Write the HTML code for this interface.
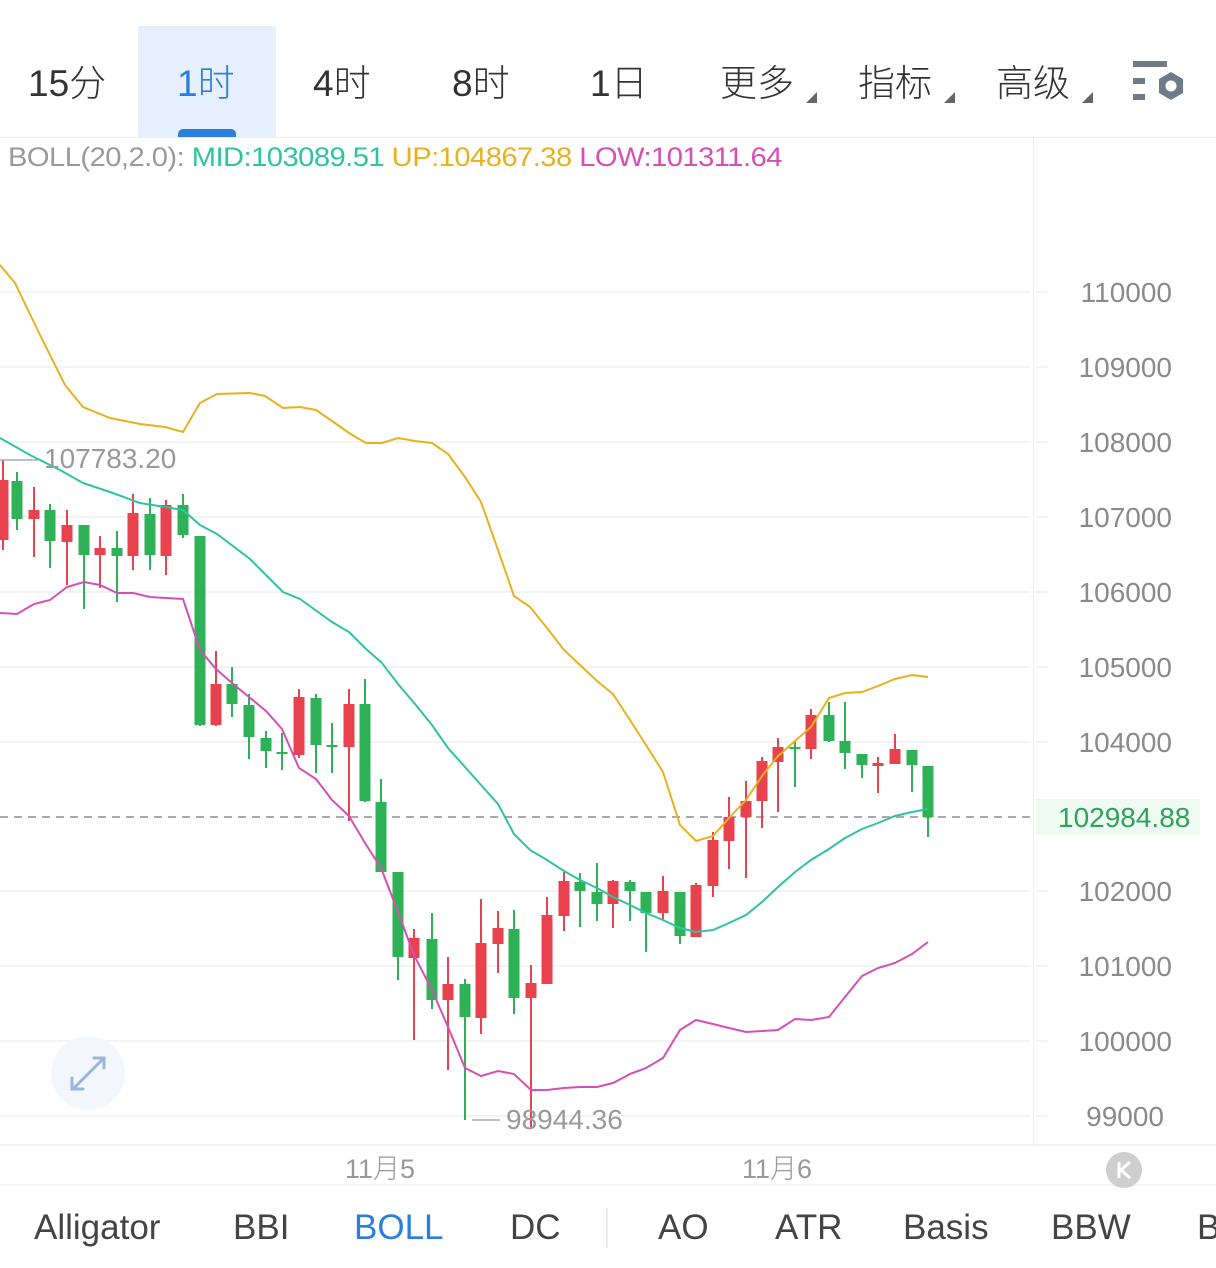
<!DOCTYPE html>
<html><head><meta charset="utf-8"><style>
html,body{margin:0;padding:0;background:#fff;width:1216px;height:1268px;overflow:hidden;font-family:"Liberation Sans","Noto Sans CJK SC",sans-serif}
.tab{position:absolute;top:53px;font-size:37px;color:#333;font-weight:300}
.tri{position:absolute;width:0;height:0;border-left:11px solid transparent;border-bottom:11px solid #666}
.ax{position:absolute;right:44px;font-size:28px;color:#8a8a8a;font-weight:300}
.bt{position:absolute;top:1208px;font-size:35px;color:#444;font-weight:300}
</style></head><body>
<div style="position:absolute;left:138px;top:26px;width:138px;height:111px;background:#e6f0fd"></div>
<div style="position:absolute;left:178px;top:129px;width:58px;height:8px;background:#2b7de0;border-radius:5px 5px 0 0"></div>
<div class="tab" style="left:28px">15分</div>
<div class="tab" style="left:177px;color:#2b7de0">1时</div>
<div class="tab" style="left:313px">4时</div>
<div class="tab" style="left:452px">8时</div>
<div class="tab" style="left:590px">1日</div>
<div class="tab" style="left:720px">更多</div><div class="tri" style="left:806px;top:92px"></div>
<div class="tab" style="left:858px">指标</div><div class="tri" style="left:944px;top:92px"></div>
<div class="tab" style="left:996px">高级</div><div class="tri" style="left:1082px;top:92px"></div>
<svg style="position:absolute;left:1130px;top:58px" width="60" height="50" viewBox="0 0 60 50">
<rect x="3" y="3" width="34" height="6" fill="#6f7b88"/><rect x="3" y="20" width="12" height="6" fill="#6f7b88"/><rect x="3" y="36" width="12" height="6" fill="#6f7b88"/>
<polygon points="41,14 53,21 53,35 41,42 29,35 29,21" fill="#6f7b88"/><circle cx="41" cy="28" r="5.5" fill="#fff"/></svg>
<div style="position:absolute;left:0;top:137px;width:1216px;height:1px;background:#eee"></div>
<div style="position:absolute;left:8px;top:142px;font-size:27px;font-weight:300;white-space:nowrap;letter-spacing:-0.5px;transform:scaleX(1.08);transform-origin:0 0"><span style="color:#9a9a9a">BOLL(20,2.0):</span> <span style="color:#2ec4a0">MID:103089.51</span> <span style="color:#e8b21e">UP:104867.38</span> <span style="color:#d64fb5">LOW:101311.64</span></div>
<div style="position:absolute;left:1033px;top:138px;width:1px;height:1007px;background:#eee"></div>
<svg style="position:absolute;left:0;top:0" width="1216" height="1268">
<g stroke="#f0f0f0" stroke-width="1.5">
<line x1="0" y1="292" x2="1030" y2="292"/><line x1="0" y1="367" x2="1030" y2="367"/><line x1="0" y1="442" x2="1030" y2="442"/><line x1="0" y1="517" x2="1030" y2="517"/><line x1="0" y1="592" x2="1030" y2="592"/><line x1="0" y1="667" x2="1030" y2="667"/><line x1="0" y1="742" x2="1030" y2="742"/><line x1="0" y1="891" x2="1030" y2="891"/><line x1="0" y1="966" x2="1030" y2="966"/><line x1="0" y1="1041" x2="1030" y2="1041"/><line x1="0" y1="1116" x2="1030" y2="1116"/>
<line x1="1036" y1="292" x2="1048" y2="292"/><line x1="1036" y1="367" x2="1048" y2="367"/><line x1="1036" y1="442" x2="1048" y2="442"/><line x1="1036" y1="517" x2="1048" y2="517"/><line x1="1036" y1="592" x2="1048" y2="592"/><line x1="1036" y1="667" x2="1048" y2="667"/><line x1="1036" y1="742" x2="1048" y2="742"/><line x1="1036" y1="891" x2="1048" y2="891"/><line x1="1036" y1="966" x2="1048" y2="966"/><line x1="1036" y1="1041" x2="1048" y2="1041"/><line x1="1036" y1="1116" x2="1048" y2="1116"/>
</g>
<line x1="0" y1="817" x2="1030" y2="817" stroke="#aaa" stroke-width="2" stroke-dasharray="8,6"/>
<g id="c"></g>
<polyline fill="none" stroke="#e8b21e" stroke-width="2" points="0,265 15,283 40,335 65,385 83,407 110,418 140,424 165,427 183,432 200,403 217,394 250,393 265,396 283,408 300,407 316,410 332,421 349,433 366,443 382,443 398,438 415,441 432,443 448,454 465,477 481,502 498,550 514,596 530,607 547,628 564,650 580,665 597,681 613,694 630,720 646,745 663,772 680,825 696,841 713,836 729,818 746,800 762,776 778,756 795,741 811,727 829,698 845,693 862,692 878,686 895,679 912,675 928,677"/>
<polyline fill="none" stroke="#2ec4a0" stroke-width="2" points="0,438 30,455 60,470 83,483 110,492 140,503 165,507 183,510 200,525 217,534 250,559 283,592 300,599 332,622 349,632 365,648 382,663 398,684 415,704 432,725 448,748 465,767 481,785 498,804 514,834 530,850 547,860 564,871 580,880 597,888 613,897 630,905 646,913 663,920 680,928 696,932 713,930 729,923 746,915 762,902 778,887 795,872 811,860 829,849 845,838 862,829 878,823 895,816 912,812 928,809"/>
<polyline fill="none" stroke="#d64fb5" stroke-width="2" points="0,613 17,614 34,604 50,600 67,587 84,582 100,585 117,593 133,593 150,597 166,598 183,599 200,650 216,669 232,683 249,697 266,711 282,729 299,768 316,779 332,800 349,816 365,843 381,868 398,912 414,955 432,990 448,1027 465,1068 481,1076 498,1071 514,1074 531,1090 547,1090 564,1088 580,1087 597,1087 613,1083 630,1074 646,1068 663,1058 680,1030 696,1020 713,1024 729,1028 746,1032 762,1031 778,1030 795,1019 811,1020 829,1017 845,997 862,976 878,968 895,963 912,954 928,942"/>
<line x1="0" y1="460" x2="38" y2="460" stroke="#aaa" stroke-width="1.5"/>
<line x1="472" y1="1120" x2="500" y2="1120" stroke="#aaa" stroke-width="1.5"/>
<line x1="0" y1="1145" x2="1216" y2="1145" stroke="#eee" stroke-width="1.5"/>
<line x1="0" y1="1185" x2="1216" y2="1185" stroke="#f2f2f2" stroke-width="1.5"/>
<line x1="607" y1="1208" x2="607" y2="1248" stroke="#e4e4e4" stroke-width="1.5"/>
<circle cx="88" cy="1073" r="37" fill="#f3f7fd"/>
<g stroke="#9ab6dc" stroke-width="3" fill="none" stroke-linecap="round"><path d="M74 1088 L104 1058 M94 1058 L104 1058 L104 1068 M72 1078 L72 1089 L83 1089"/></g>
<circle cx="1124" cy="1170" r="18" fill="#cfcfcf"/>
<path d="M1119 1162 V1178 M1130 1162 L1121 1170 L1130 1178" stroke="#fff" stroke-width="3" fill="none"/>
</svg>
<div style="position:absolute;left:44px;top:443px;font-size:28px;color:#999;font-weight:300">107783.20</div>
<div style="position:absolute;left:506px;top:1104px;font-size:28px;color:#999;font-weight:300">98944.36</div>
<div class="ax" style="top:277px">110000</div><div class="ax" style="top:352px">109000</div><div class="ax" style="top:427px">108000</div><div class="ax" style="top:502px">107000</div><div class="ax" style="top:577px">106000</div><div class="ax" style="top:652px">105000</div><div class="ax" style="top:727px">104000</div><div class="ax" style="top:876px">102000</div><div class="ax" style="top:951px">101000</div><div class="ax" style="top:1026px">100000</div><div class="ax" style="top:1101px;right:52px">99000</div>
<div style="position:absolute;left:1036px;top:799px;width:164px;height:36px;background:#effaf2"></div>
<div style="position:absolute;left:1058px;top:802px;font-size:28px;color:#2fa35a;font-weight:300">102984.88</div>
<div style="position:absolute;left:345px;top:1147px;font-size:27px;color:#999;font-weight:300">11月5</div>
<div style="position:absolute;left:742px;top:1147px;font-size:27px;color:#999;font-weight:300">11月6</div>
<div class="bt" style="left:34px">Alligator</div><div class="bt" style="left:233px">BBI</div><div class="bt" style="left:354px;color:#2b7de0">BOLL</div><div class="bt" style="left:510px">DC</div><div class="bt" style="left:658px">AO</div><div class="bt" style="left:775px">ATR</div><div class="bt" style="left:903px">Basis</div><div class="bt" style="left:1051px">BBW</div><div class="bt" style="left:1197px">B</div>
<script>
var R="#e8424f",G="#2fb157";
var d=[[3,R,480,540,460,550],[17,G,481,519,472,530],[34,R,510,519,487,557],[50,G,510,541,504,568],[67,R,525,542,510,585],[84,G,525,555,525,609],[100,R,548,555,536,588],[117,G,548,556,531,602],[133,R,513,556,494,570],[150,G,514,555,498,570],[166,R,505,556,500,575],[183,G,505,535,494,538],[200,G,536,725,536,726],[216,R,684,725,651,726],[232,G,684,704,667,717],[249,G,705,737,694,759],[266,G,738,751,731,768],[282,G,752,754,733,770],[299,R,697,755,689,758],[316,G,698,745,694,773],[332,G,745,747,723,773],[349,R,704,747,689,821],[365,G,704,801,679,802],[381,G,802,872,779,872],[398,G,872,957,872,980],[414,R,938,958,929,1040],[432,G,939,1000,913,1009],[448,R,984,1000,957,1070],[465,G,984,1017,979,1120],[481,R,943,1018,899,1034],[498,R,928,944,911,973],[514,G,929,998,910,1014],[531,R,983,998,965,1127],[547,R,915,984,897,984],[564,R,881,916,872,931],[580,G,882,891,873,927],[597,G,892,904,863,921],[613,R,881,904,880,928],[630,G,882,891,880,921],[646,G,892,913,892,952],[663,R,891,913,876,920],[680,G,892,936,892,944],[696,R,885,937,883,937],[713,R,840,886,832,897],[729,R,817,841,797,869],[746,R,801,817,781,878],[762,R,761,801,757,828],[778,R,747,762,738,812],[795,G,747,749,742,787],[811,R,715,749,709,759],[829,G,715,741,702,742],[845,G,741,753,702,769],[862,G,754,765,754,778],[878,R,763,766,757,793],[895,R,749,764,734,764],[912,G,750,765,750,792],[928,G,766,817,766,837]];
var s="";d.forEach(function(c){s+='<line x1="'+c[0]+'" x2="'+c[0]+'" y1="'+c[4]+'" y2="'+c[5]+'" stroke="'+c[1]+'" stroke-width="2"/><rect x="'+(c[0]-5.5)+'" y="'+c[2]+'" width="11" height="'+Math.max(2,c[3]-c[2])+'" fill="'+c[1]+'"/>';});
document.getElementById("c").innerHTML=s;
</script>
</body></html>
